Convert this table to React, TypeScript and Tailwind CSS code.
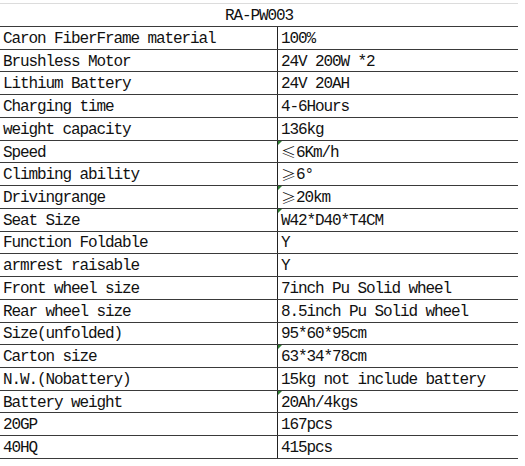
const le = <span className="font-['Noto_Sans_CJK_SC',sans-serif] text-[15px] font-light tracking-normal">≤</span>;
const ge = <span className="font-['Noto_Sans_CJK_SC',sans-serif] text-[15px] font-light tracking-normal">≥</span>;

const rows: [string, React.ReactNode, boolean?][] = [
  ["Caron FiberFrame material", "100%"],
  ["Brushless Motor", "24V 200W *2"],
  ["Lithium Battery", "24V 20AH"],
  ["Charging time", "4-6Hours"],
  ["weight capacity", "136kg"],
  ["Speed", <>{le}6Km/h</>, true],
  ["Climbing ability", <>{ge}6°</>],
  ["Drivingrange", <>{ge}20km</>, true],
  ["Seat Size", "W42*D40*T4CM", true],
  ["Function Foldable", "Y"],
  ["armrest raisable", "Y"],
  ["Front wheel size", "7inch Pu Solid wheel"],
  ["Rear wheel size", "8.5inch Pu Solid wheel"],
  ["Size(unfolded)", "95*60*95cm"],
  ["Carton size", "63*34*78cm", true],
  ["N.W.(Nobattery)", "15kg not include battery"],
  ["Battery weight", "20Ah/4kgs", true],
  ["20GP", "167pcs"],
  ["40HQ", "415pcs"],
];

export default function App() {
  return (
    <div className="w-[525px] h-[466px] bg-white pt-[3px] font-['Liberation_Mono',monospace] text-[16px] tracking-[-1.1px] text-[#111]">
      <div className="w-[518px]">
        <div className="h-[24px] border-t border-b border-t-[#dcdcdc] border-b-[#3a3a3a] flex items-center justify-center pt-[1px]">
          RA-PW003
        </div>
        {rows.map(([label, value, mark]) => (
          <div key={label} className="h-[22.74px] border-b border-[#3a3a3a] flex">
            <div className="w-[278px] shrink-0 border-r border-[#222] flex items-center pl-[3px] pt-[2px] whitespace-nowrap">
              {label}
            </div>
            <div className="relative flex-1 flex items-center pl-[3px] pt-[2px] whitespace-nowrap">
              {mark && (
                <span className="absolute left-0 top-0 w-0 h-0 border-t-[4px] border-r-[4px] border-t-[#2e7d32] border-r-transparent" />
              )}
              {value}
            </div>
          </div>
        ))}
      </div>
    </div>
  );
}
